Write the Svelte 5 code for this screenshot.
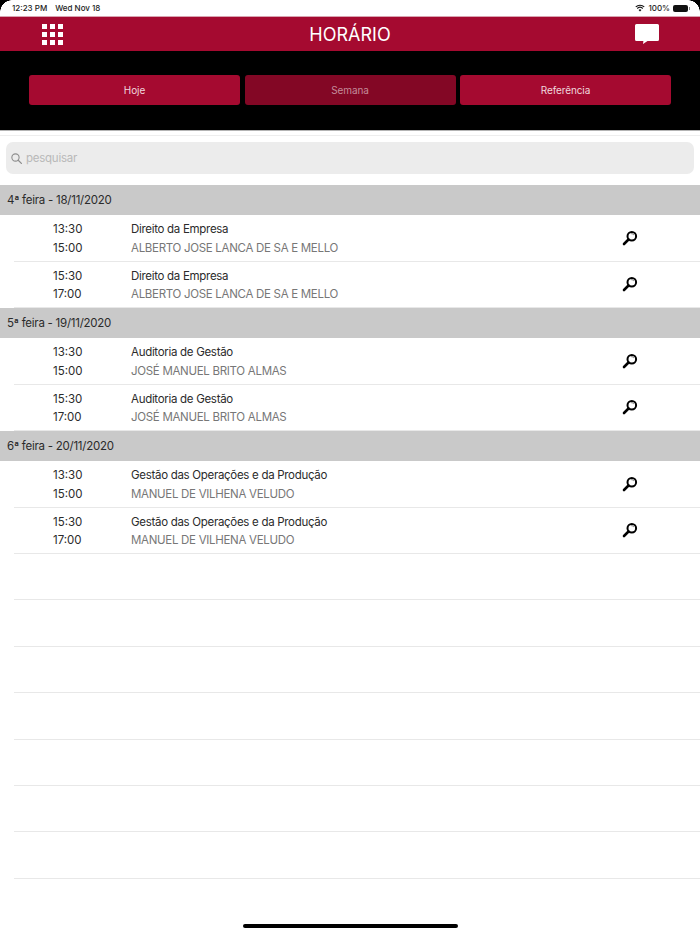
<script>
  const grid = Array.from({ length: 9 });
  const days = [
    { title: '4ª feira - 18/11/2020', subject: 'Direito da Empresa', teacher: 'ALBERTO JOSE LANCA DE SA E MELLO' },
    { title: '5ª feira - 19/11/2020', subject: 'Auditoria de Gestão', teacher: 'JOSÉ MANUEL BRITO ALMAS' },
    { title: '6ª feira - 20/11/2020', subject: 'Gestão das Operações e da Produção', teacher: 'MANUEL DE VILHENA VELUDO' }
  ];
  const slots = [['13:30', '15:00'], ['15:30', '17:00']];
  const empties = Array.from({ length: 7 });
</script>

<div class="screen">
  <div class="status">
    <span class="clock">12:23 PM</span>
    <span class="date">Wed Nov 18</span>
    <span class="spacer"></span>
    <svg class="wifi" width="13" height="10" viewBox="0 0 13 10">
      <path d="M6.5 9.6 4.6 7.5a2.8 2.8 0 0 1 3.8 0Z" fill="#111" />
      <path d="M1 3.6a8 8 0 0 1 11 0M2.9 5.6a5.2 5.2 0 0 1 7.2 0" fill="none" stroke="#111" stroke-width="1.5" />
    </svg>
    <span class="pct">100%</span>
    <span class="battery"></span>
    <span class="nub"></span>
    <span class="corner left"></span>
    <span class="corner right"></span>
  </div>

  <header class="topbar">
    <div class="grid-icon">
      {#each grid as _}<i></i>{/each}
    </div>
    <h1>HORÁRIO</h1>
    <svg class="chat" width="24" height="20" viewBox="0 0 24 20">
      <path d="M1.500 0h21A1.500 1.500 0 0 1 24 1.500v14a1.500 1.500 0 0 1-1.500 1.500H12.500L8 20l.4-3H1.500A1.500 1.500 0 0 1 0 15.500v-14A1.500 1.500 0 0 1 1.500 0Z" fill="#fff" />
    </svg>
  </header>

  <nav class="tabs">
    <button class="tab">Hoje</button>
    <button class="tab active">Semana</button>
    <button class="tab">Referência</button>
  </nav>

  <div class="search-wrap">
    <div class="hairline"></div>
    <div class="search">
      <svg width="11" height="11" viewBox="0 0 13 13">
        <circle cx="5.300" cy="5.300" r="4.300" fill="none" stroke="#8e8e8e" stroke-width="1.300" />
        <path d="M8.500 8.500 12.300 12.300" stroke="#8e8e8e" stroke-width="1.500" stroke-linecap="round" />
      </svg>
      <span>pesquisar</span>
    </div>
  </div>

  <main>
    {#each days as day}
      <div class="day">{day.title}</div>
      {#each slots as slot}
        <div class="row">
          <div class="times"><span>{slot[0]}</span><span>{slot[1]}</span></div>
          <div class="info">
            <span class="subject">{day.subject}</span>
            <span class="teacher">{day.teacher}</span>
          </div>
          <svg class="lens" width="16" height="16" viewBox="0 0 16 16">
            <circle cx="9.800" cy="6.200" r="4.300" fill="#fff" stroke="#000" stroke-width="2" />
            <path d="M9 3.800a2.600 2.600 0 0 1 3 1.200" fill="none" stroke="#999" stroke-width="1.200" />
            <path d="M6.500 9.500 2 14" stroke="#000" stroke-width="2.600" stroke-linecap="round" />
          </svg>
        </div>
      {/each}
    {/each}
    {#each empties as _}
      <div class="row blank"></div>
    {/each}
  </main>

  <div class="home-wrap"><div class="home"></div></div>
</div>

<style>
  :global(body) {
    margin: 0;
    background: #fff;
  }
  .screen {
    width: 700px;
    height: 934px;
    overflow: hidden;
    position: relative;
    display: flex;
    flex-direction: column;
    font-family: Inter, "Liberation Sans", sans-serif;
    color: #2b2b2b;
    background: #fff;
  }
  .status {
    height: 16px;
    display: flex;
    align-items: center;
    padding: 0 10px 0 12px;
    font-size: 8px;
    font-weight: 500;
    color: #222;
    position: relative;
    flex: none;
  }
  .clock { margin-right: 8px; }
  .spacer { flex: 1; }
  .wifi { margin-right: 3px; width: 10px; height: 8px; }
  .pct { margin-right: 3px; }
  .battery {
    width: 15px;
    height: 7px;
    background: #111;
    border-radius: 2px;
  }
  .nub {
    width: 1px;
    height: 3px;
    background: #888;
    margin-left: 1px;
  }
  .corner {
    position: absolute;
    top: 0;
    width: 12px;
    height: 12px;
    background: radial-gradient(circle at var(--cx) 100%, transparent 11.500px, #000 12px);
  }
  .corner.left { left: 0; --cx: 100%; }
  .corner.right { right: 0; --cx: 0%; }
  .topbar {
    height: 35px;
    background: #a50a30;
    border-top: 1px solid #d9a3b0;
    box-sizing: border-box;
    display: grid;
    grid-template-columns: 1fr auto 1fr;
    align-items: center;
    position: relative;
    flex: none;
  }
  .grid-icon {
    margin-left: 42px;
    width: 21px;
    height: 21px;
    display: grid;
    grid-template-columns: repeat(3, 5px);
    grid-auto-rows: 5px;
    gap: 3px;
  }
  .grid-icon i { background: #fff; }
  h1 {
    margin: 0;
    font-size: 18px;
    font-weight: 400;
    color: #fff;
  }
  .chat { justify-self: end; margin-right: 41px; margin-top: -1px; }
  .tabs {
    height: 79px;
    box-sizing: border-box;
    background: #000;
    padding: 0 29px 1px;
    display: grid;
    grid-template-columns: repeat(3, 1fr);
    gap: 4.500px;
    align-items: center;
    flex: none;
  }
  .tab {
    height: 30px;
    border: 0;
    border-radius: 3px;
    background: #a50a30;
    color: #f0d8de;
    font: 400 10px Inter, "Liberation Sans", sans-serif;
    letter-spacing: -0.1px;
    padding: 0;
  }
  .tab.active {
    background: #830725;
    color: #c48c9a;
  }
  .search-wrap {
    height: 55px;
    box-sizing: border-box;
    border-top: 1px solid #b4b4b4;
    padding: 4px 6px 0;
    flex: none;
  }
  .hairline {
    height: 1px;
    margin: 0 -6px 6px;
    background: #eee;
  }
  .search {
    height: 32px;
    box-sizing: border-box;
    background: #ececec;
    border-radius: 7px;
    display: flex;
    align-items: center;
    gap: 4px;
    padding-left: 5px;
    font-size: 11.500px;
    letter-spacing: -0.25px;
    color: #b9b9b9;
  }
  .day {
    height: 30px;
    background: #c9c9c9;
    display: flex;
    align-items: center;
    padding-left: 7px;
    font-size: 11.500px;
    letter-spacing: -0.25px;
    color: #2b2b2b;
  }
  .row {
    height: 46.500px;
    box-sizing: border-box;
    margin-left: 14px;
    border-bottom: 1px solid #e8e8e8;
    display: grid;
    grid-template-columns: 117px 1fr auto;
    align-items: center;
    font-size: 11.500px;
    position: relative;
  }
  .row.blank { height: 46.400px; }
  .times {
    display: flex;
    flex-direction: column;
    gap: 4px;
    padding-left: 39px;
    padding-top: 2px;
  }
  .times span, .info span { line-height: 14.500px; }
  .info {
    display: flex;
    flex-direction: column;
    gap: 4px;
    padding-top: 2px;
    letter-spacing: -0.3px;
  }
  .teacher { color: #777; }
  .lens { margin-right: 62px; }
  main { flex: 1; overflow: hidden; }
  .home-wrap {
    position: absolute;
    left: 0;
    right: 0;
    bottom: 6px;
    display: flex;
    justify-content: center;
  }
  .home {
    width: 215px;
    height: 4px;
    border-radius: 2px;
    background: #000;
  }
</style>
